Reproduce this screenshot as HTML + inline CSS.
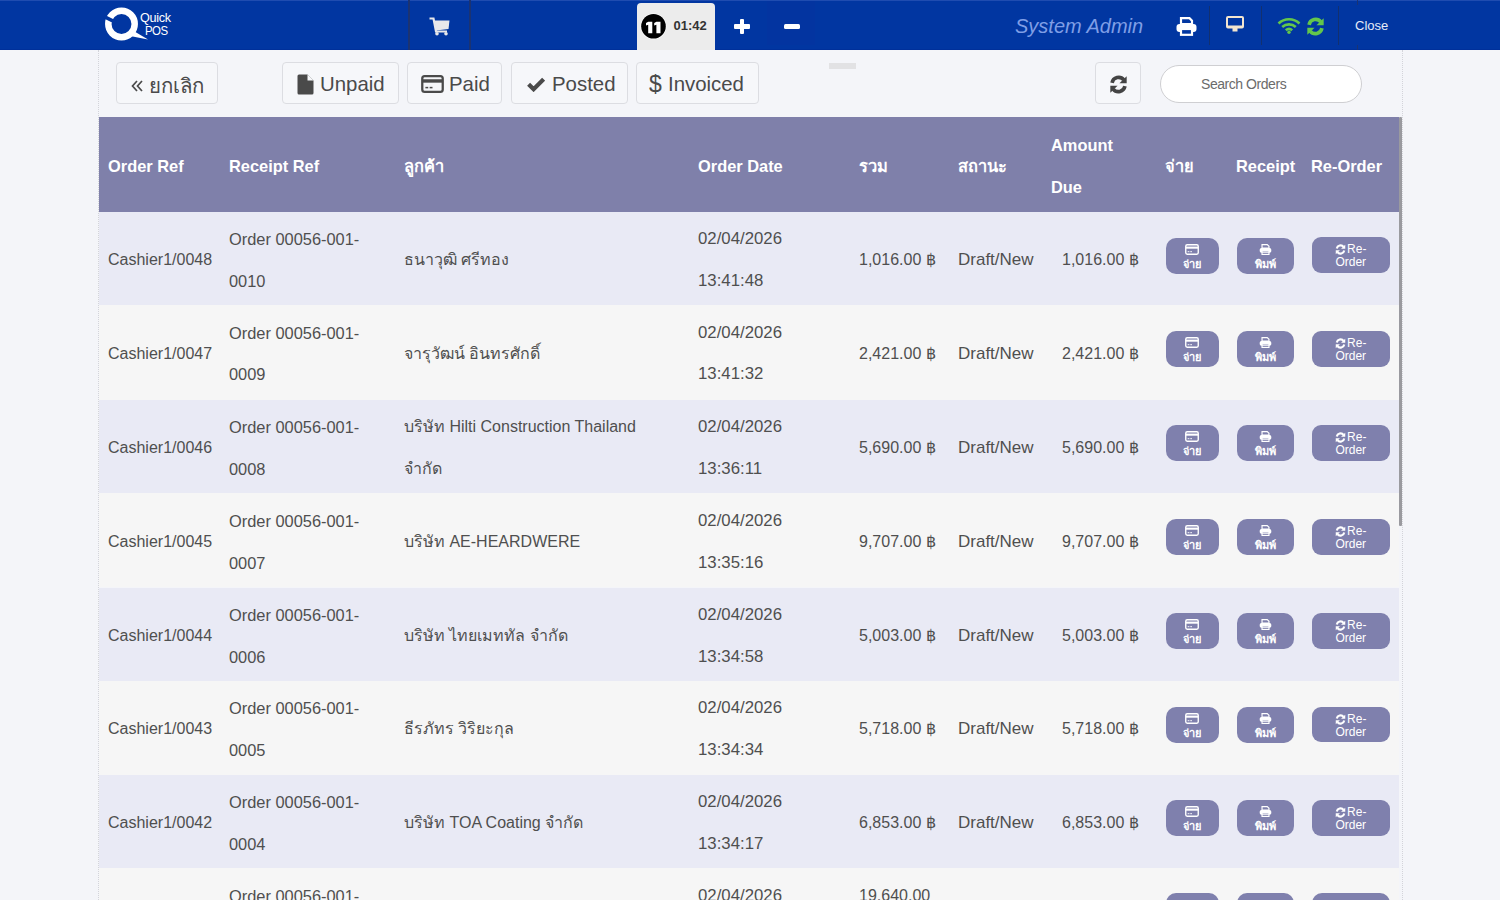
<!DOCTYPE html>
<html><head><meta charset="utf-8">
<style>
*{box-sizing:border-box;margin:0;padding:0}
html,body{width:1500px;height:900px;overflow:hidden;background:#f4f5f9;font-family:"Liberation Sans",sans-serif;}
.a{position:absolute}
#nav{position:absolute;left:0;top:0;width:1500px;height:50px;background:#0136a1;}
.sep{position:absolute;top:0;width:2px;height:50px;background:#1b3372;}
.sep2{position:absolute;top:6px;width:1px;height:39px;background:#12306f;}
#cont{position:absolute;left:98px;top:50px;width:1305px;height:850px;border-left:1px dotted #d3d4da;border-right:1px dotted #d3d4da;}
.btn{position:absolute;top:62px;height:42px;border:1px solid #dcdde2;border-radius:4px;background:#f6f7fa;color:#4a4a4a;font-size:20.4px;line-height:40px;white-space:nowrap}
.btn .ic{position:absolute}
.btn .t{position:absolute;top:1px}
#thead{position:absolute;left:99px;top:117px;width:1300px;height:95px;background:#7f80aa;color:#fff;font-weight:bold;font-size:16.4px}
.th{position:absolute;white-space:nowrap;line-height:20px}
.row{position:absolute;left:99px;width:1300px;height:93.7px;color:#4f4f4f;font-size:16px}
.row.o{background:#e9eaf5}
.row.e{background:#f6f6f6}
.c{position:absolute;white-space:nowrap;line-height:20px}
.ab{position:absolute;background:#7f80ad;border-radius:10px;color:#fff;text-align:center}
.ab .ic{position:absolute;left:0;width:100%;line-height:0}
.ab .bt{position:absolute;left:0;width:100%;font-size:11px;font-weight:bold;line-height:12px}
.ab .rt{position:absolute;left:0;top:6px;width:100%;font-size:12px;line-height:13px}
.ab .rt svg{vertical-align:top;margin-top:1px;margin-right:1px}
</style></head><body>
<div id="nav">
  <div class="a" style="left:0;top:0;width:1500px;height:1px;background:#1f4cb0"></div>
  <div class="a" style="left:0;top:49px;width:1500px;height:1px;background:#00309a"></div>
  <div class="a" style="left:1356.5px;top:0;width:1.5px;height:5px;background:#1b3372"></div><div class="a" style="left:1356.5px;top:45px;width:1.5px;height:5px;background:#1b3372"></div>
  <!-- logo -->
  <svg class="a" style="left:103px;top:5px" width="50" height="40" viewBox="0 0 50 40">
    <circle cx="18.5" cy="19" r="13.2" fill="none" stroke="#fff" stroke-width="6.5"/>
    <path d="M22 30 L45 34.5 L29 25 Z" fill="#fff"/>
    <path d="M2 10 L14 16 L12 19 L0 13 Z" fill="#0136a1"/>
  </svg>
  <div class="a" style="left:139.5px;top:11px;color:#fff;font-size:13px;line-height:13px;letter-spacing:-0.3px;transform:scaleX(0.97);transform-origin:0 0">Quick</div>
  <div class="a" style="left:145px;top:24px;color:#fff;font-size:13px;line-height:13px;letter-spacing:-0.6px;transform:scaleX(0.88);transform-origin:0 0">POS</div>
  <div class="sep" style="left:408px"></div>
  <div class="sep" style="left:469px"></div>
  <!-- cart -->
  <svg class="a" style="left:429px;top:17px" width="21" height="19" viewBox="0 0 21 19">
    <path d="M0.5 1.5h4l2.5 13h11" fill="none" stroke="#e8e8ea" stroke-width="2.2"/>
    <path d="M5.5 3.5h15l-1 8.5l-12.5 1.5z" fill="#e8e8ea"/>
    <circle cx="8" cy="16.8" r="1.8" fill="#e8e8ea"/><circle cx="17" cy="16.8" r="1.8" fill="#e8e8ea"/>
  </svg>
  <!-- tab -->
  <div class="a" style="left:637px;top:3px;width:78px;height:47px;background:#ececec;border-radius:4px 4px 0 0"></div>
  <svg class="a" style="left:640px;top:13px" width="27" height="27" viewBox="0 0 27 27"><circle cx="13.5" cy="13.3" r="12.9" fill="#fff"/><circle cx="13.5" cy="13.3" r="12.3" fill="#000"/><path d="M8.2 8.7h4.1v11.6h-4.1v-8.6l-2.2 0.8v-2.4z" fill="#fff"/><path d="M16.4 8.7h4.1v11.6h-4.1v-8.6l-2.2 0.8v-2.4z" fill="#fff"/></svg>
  <div class="a" style="left:673.5px;top:18px;color:#333;font-weight:bold;font-size:13px;line-height:15px">01:42</div>
  <div class="a" style="left:767px;top:1px;width:48px;height:44px;background:#0334a0"></div>
  <div class="a" style="left:734px;top:24.2px;width:16px;height:4.8px;background:#fff;border-radius:1px"></div>
  <div class="a" style="left:739.7px;top:19px;width:4.8px;height:15px;background:#fff;border-radius:1px"></div>
  <div class="a" style="left:784px;top:24.2px;width:16px;height:4.8px;background:#fff;border-radius:1.5px"></div>
  <div class="a" style="left:1015px;top:14px;color:#7f9ee6;font-style:italic;font-size:20px;line-height:24px">System Admin</div>
  <!-- printer -->
  <svg class="a" style="left:1176px;top:17px" width="21" height="19" viewBox="0 0 21 19">
    <path d="M5 1.2h8.5l2.5 2.5v3.3H5z" fill="none" stroke="#fff" stroke-width="2.2"/>
    <rect x="0.5" y="7" width="20" height="8" rx="3" fill="#fff"/>
    <rect x="5" y="12" width="11" height="5.8" fill="#0136a1" stroke="#fff" stroke-width="2.2"/>
  </svg>
  <div class="sep2" style="left:1208.5px"></div>
  <!-- monitor -->
  <svg class="a" style="left:1226px;top:16px" width="18" height="16" viewBox="0 0 18 16">
    <rect x="1" y="1" width="16" height="10.5" rx="1" fill="none" stroke="#f3e5cf" stroke-width="2"/>
    <rect x="1" y="9.5" width="16" height="2.5" fill="#f3e5cf"/>
    <rect x="6.5" y="12" width="5" height="3.5" fill="#f3e5cf"/>
  </svg>
  <div class="sep2" style="left:1260.5px"></div>
  <!-- wifi -->
  <svg class="a" style="left:1277px;top:17px" width="24" height="17" viewBox="0 0 24 17">
    <path d="M1.5 6.5A15 15 0 0 1 22.5 6.5" fill="none" stroke="#63c64b" stroke-width="2.6"/>
    <path d="M5.2 10A10 10 0 0 1 18.8 10" fill="none" stroke="#63c64b" stroke-width="2.6"/>
    <path d="M8.8 13.2A5 5 0 0 1 15.2 13.2" fill="none" stroke="#63c64b" stroke-width="2.6"/>
    <circle cx="12" cy="15.3" r="1.7" fill="#63c64b"/>
  </svg>
  <svg class="a" style="left:1306px;top:17px" width="19" height="19" viewBox="0 0 20 20">
    <path d="M3.2 8.2A7 7 0 0 1 15.6 5.2" fill="none" stroke="#63c64b" stroke-width="3.8"/><path d="M18.6 1.2v7.6h-7.6z" fill="#63c64b"/><path d="M16.8 11.8A7 7 0 0 1 4.4 14.8" fill="none" stroke="#63c64b" stroke-width="3.8"/><path d="M1.4 18.8v-7.6h7.6z" fill="#63c64b"/>
  </svg>
  <div class="sep2" style="left:1338px"></div>
  <div class="a" style="left:1355px;top:18px;color:#e6ebf7;font-size:13px;line-height:15px">Close</div>
</div>
<div id="cont"></div>
<!-- toolbar -->
<div class="btn" style="left:116px;width:102px"><svg class="ic" style="left:14px;top:17px" width="12" height="12" viewBox="0 0 12 12"><path d="M6 1L1.5 6L6 11M11 1L6.5 6L11 11" fill="none" stroke="#4a4a4a" stroke-width="1.7"/></svg><div class="t" style="left:31.5px;top:2.5px">ยกเลิก</div></div>
<div class="btn" style="left:282px;width:117px">
  <svg class="ic" style="left:13px;top:11px" width="18" height="21" viewBox="0 0 18 21"><path d="M1.5 0.5h10l6 6v12.5a1.5 1.5 0 0 1-1.5 1.5h-13a1.5 1.5 0 0 1-1.5-1.5v-17a1.5 1.5 0 0 1 1.5-1.5z" fill="#4a4a4a"/><path d="M11.5 0.5v6h6z" fill="#f6f7fa"/></svg>
  <div class="t" style="left:37px">Unpaid</div></div>
<div class="btn" style="left:407px;width:95px">
  <svg class="ic" style="left:13px;top:12px" width="23" height="18" viewBox="0 0 24 19"><rect x="1.2" y="1.2" width="21.6" height="16.6" rx="2.5" fill="none" stroke="#4a4a4a" stroke-width="2.4"/><rect x="1.2" y="4.5" width="21.6" height="3.6" fill="#4a4a4a"/><rect x="4.5" y="12.5" width="3" height="1.6" fill="#4a4a4a"/><rect x="9" y="12.5" width="3" height="1.6" fill="#4a4a4a"/></svg>
  <div class="t" style="left:41px">Paid</div></div>
<div class="btn" style="left:511px;width:117px">
  <svg class="ic" style="left:15px;top:14px" width="18" height="15" viewBox="0 0 18 15"><path d="M1.6 7.2l5 5l10-10" fill="none" stroke="#4a4a4a" stroke-width="4.2"/></svg>
  <div class="t" style="left:40px">Posted</div></div>
<div class="btn" style="left:636px;width:123px">
  <div class="t" style="left:12px;font-size:23px;top:1px">$</div>
  <div class="t" style="left:31px">Invoiced</div></div>
<div class="a" style="left:829px;top:63px;width:27px;height:6px;background:#e2e2e4"></div>
<div class="btn" style="left:1095px;width:46px">
  <svg class="ic" style="left:13px;top:12px" width="19" height="19" viewBox="0 0 20 20"><path d="M3.2 8.2A7 7 0 0 1 15.6 5.2" fill="none" stroke="#444" stroke-width="3.8"/><path d="M18.6 1.2v7.6h-7.6z" fill="#444"/><path d="M16.8 11.8A7 7 0 0 1 4.4 14.8" fill="none" stroke="#444" stroke-width="3.8"/><path d="M1.4 18.8v-7.6h7.6z" fill="#444"/></svg>
</div>
<div class="a" style="left:1160px;top:65px;width:202px;height:37.5px;border:1px solid #cfcfd2;border-radius:19px;background:#fff;color:#6b6b6b;font-size:14px;line-height:35px;padding-top:1px;letter-spacing:-0.45px;padding-left:40px">Search Orders</div>
<!-- table header -->
<div id="thead">
  <div class="th" style="left:9px;top:39px">Order Ref</div>
  <div class="th" style="left:130px;top:39px">Receipt Ref</div>
  <div class="th" style="left:305px;top:39px">ลูกค้า</div>
  <div class="th" style="left:599px;top:39px">Order Date</div>
  <div class="th" style="left:760px;top:39px">รวม</div>
  <div class="th" style="left:859px;top:39px">สถานะ</div>
  <div class="th" style="left:952px;top:18px">Amount</div>
  <div class="th" style="left:952px;top:60px">Due</div>
  <div class="th" style="left:1066px;top:39px">จ่าย</div>
  <div class="th" style="left:1137px;top:39px">Receipt</div>
  <div class="th" style="left:1212px;top:39px">Re-Order</div>
</div>
<div class="row o" style="top:212.00px;height:92.60px">
<div class="c" style="left:9px;top:38.1px;">Cashier1/0048</div>
<div class="c" style="left:130px;top:17.0px;font-size:16.4px">Order 00056-001-</div>
<div class="c" style="left:130px;top:58.7px;font-size:16.4px">0010</div>
<div class="c" style="left:305px;top:38.1px;">ธนาวุฒิ ศรีทอง</div>
<div class="c" style="left:599px;top:17.0px;font-size:16.8px">02/04/2026</div>
<div class="c" style="left:599px;top:58.7px;font-size:16.8px">13:41:48</div>
<div class="c" style="left:760px;top:38.1px;">1,016.00 ฿</div>
<div class="c" style="left:859px;top:38.1px;font-size:17px">Draft/New</div>
<div class="c" style="left:963px;top:38.1px;">1,016.00 ฿</div>
<div class="ab" style="left:1066.5px;top:25.5px;width:53px;height:36px;border-radius:10px"><div class="ic" style="top:6px"><svg width="14" height="11" viewBox="0 0 24 19"><rect x="1.2" y="1.2" width="21.6" height="16.6" rx="2.5" fill="none" stroke="#fff" stroke-width="2.4"/><rect x="1.2" y="4.5" width="21.6" height="3.6" fill="#fff"/><rect x="4.5" y="12.5" width="3" height="1.6" fill="#fff"/><rect x="9" y="12.5" width="3" height="1.6" fill="#fff"/></svg></div><div class="bt" style="top:20px">จ่าย</div></div>
<div class="ab" style="left:1137.5px;top:25.5px;width:57px;height:36px;border-radius:10px"><div class="ic" style="top:6px"><svg width="13" height="11" viewBox="0 0 22 19"><path d="M5 1h9l3 3v3H5z" fill="none" stroke="#fff" stroke-width="2"/><rect x="1" y="7" width="20" height="8" rx="3" fill="#fff"/><rect x="5" y="12" width="12" height="6" fill="#7f80ad" stroke="#fff" stroke-width="2"/><rect x="5" y="13.5" width="12" height="1.6" fill="#fff"/></svg></div><div class="bt" style="top:20px">พิมพ์</div></div>
<div class="ab" style="left:1212.5px;top:25.3px;width:78.5px;height:35.5px;border-radius:9px"><div class="rt"><svg width="11" height="11" viewBox="0 0 20 20"><path d="M3.2 8.2A7 7 0 0 1 15.6 5.2" fill="none" stroke="#fff" stroke-width="3.8"/><path d="M18.6 1.2v7.6h-7.6z" fill="#fff"/><path d="M16.8 11.8A7 7 0 0 1 4.4 14.8" fill="none" stroke="#fff" stroke-width="3.8"/><path d="M1.4 18.8v-7.6h7.6z" fill="#fff"/></svg><span style="vertical-align:top">Re-</span><br>Order</div></div>
</div>
<div class="row e" style="top:304.60px;height:95.10px">
<div class="c" style="left:9px;top:39.3px;">Cashier1/0047</div>
<div class="c" style="left:130px;top:18.2px;font-size:16.4px">Order 00056-001-</div>
<div class="c" style="left:130px;top:59.9px;font-size:16.4px">0009</div>
<div class="c" style="left:305px;top:39.3px;">จารุวัฒน์ อินทรศักดิ์</div>
<div class="c" style="left:599px;top:18.2px;font-size:16.8px">02/04/2026</div>
<div class="c" style="left:599px;top:59.9px;font-size:16.8px">13:41:32</div>
<div class="c" style="left:760px;top:39.3px;">2,421.00 ฿</div>
<div class="c" style="left:859px;top:39.3px;font-size:17px">Draft/New</div>
<div class="c" style="left:963px;top:39.3px;">2,421.00 ฿</div>
<div class="ab" style="left:1066.5px;top:26.7px;width:53px;height:36px;border-radius:10px"><div class="ic" style="top:6px"><svg width="14" height="11" viewBox="0 0 24 19"><rect x="1.2" y="1.2" width="21.6" height="16.6" rx="2.5" fill="none" stroke="#fff" stroke-width="2.4"/><rect x="1.2" y="4.5" width="21.6" height="3.6" fill="#fff"/><rect x="4.5" y="12.5" width="3" height="1.6" fill="#fff"/><rect x="9" y="12.5" width="3" height="1.6" fill="#fff"/></svg></div><div class="bt" style="top:20px">จ่าย</div></div>
<div class="ab" style="left:1137.5px;top:26.7px;width:57px;height:36px;border-radius:10px"><div class="ic" style="top:6px"><svg width="13" height="11" viewBox="0 0 22 19"><path d="M5 1h9l3 3v3H5z" fill="none" stroke="#fff" stroke-width="2"/><rect x="1" y="7" width="20" height="8" rx="3" fill="#fff"/><rect x="5" y="12" width="12" height="6" fill="#7f80ad" stroke="#fff" stroke-width="2"/><rect x="5" y="13.5" width="12" height="1.6" fill="#fff"/></svg></div><div class="bt" style="top:20px">พิมพ์</div></div>
<div class="ab" style="left:1212.5px;top:26.5px;width:78.5px;height:35.5px;border-radius:9px"><div class="rt"><svg width="11" height="11" viewBox="0 0 20 20"><path d="M3.2 8.2A7 7 0 0 1 15.6 5.2" fill="none" stroke="#fff" stroke-width="3.8"/><path d="M18.6 1.2v7.6h-7.6z" fill="#fff"/><path d="M16.8 11.8A7 7 0 0 1 4.4 14.8" fill="none" stroke="#fff" stroke-width="3.8"/><path d="M1.4 18.8v-7.6h7.6z" fill="#fff"/></svg><span style="vertical-align:top">Re-</span><br>Order</div></div>
</div>
<div class="row o" style="top:399.70px;height:93.10px">
<div class="c" style="left:9px;top:38.4px;">Cashier1/0046</div>
<div class="c" style="left:130px;top:17.3px;font-size:16.4px">Order 00056-001-</div>
<div class="c" style="left:130px;top:59.0px;font-size:16.4px">0008</div>
<div class="c" style="left:305px;top:17.3px;">บริษัท Hilti Construction Thailand</div>
<div class="c" style="left:305px;top:59.0px;">จำกัด</div>
<div class="c" style="left:599px;top:17.3px;font-size:16.8px">02/04/2026</div>
<div class="c" style="left:599px;top:59.0px;font-size:16.8px">13:36:11</div>
<div class="c" style="left:760px;top:38.4px;">5,690.00 ฿</div>
<div class="c" style="left:859px;top:38.4px;font-size:17px">Draft/New</div>
<div class="c" style="left:963px;top:38.4px;">5,690.00 ฿</div>
<div class="ab" style="left:1066.5px;top:25.8px;width:53px;height:36px;border-radius:10px"><div class="ic" style="top:6px"><svg width="14" height="11" viewBox="0 0 24 19"><rect x="1.2" y="1.2" width="21.6" height="16.6" rx="2.5" fill="none" stroke="#fff" stroke-width="2.4"/><rect x="1.2" y="4.5" width="21.6" height="3.6" fill="#fff"/><rect x="4.5" y="12.5" width="3" height="1.6" fill="#fff"/><rect x="9" y="12.5" width="3" height="1.6" fill="#fff"/></svg></div><div class="bt" style="top:20px">จ่าย</div></div>
<div class="ab" style="left:1137.5px;top:25.8px;width:57px;height:36px;border-radius:10px"><div class="ic" style="top:6px"><svg width="13" height="11" viewBox="0 0 22 19"><path d="M5 1h9l3 3v3H5z" fill="none" stroke="#fff" stroke-width="2"/><rect x="1" y="7" width="20" height="8" rx="3" fill="#fff"/><rect x="5" y="12" width="12" height="6" fill="#7f80ad" stroke="#fff" stroke-width="2"/><rect x="5" y="13.5" width="12" height="1.6" fill="#fff"/></svg></div><div class="bt" style="top:20px">พิมพ์</div></div>
<div class="ab" style="left:1212.5px;top:25.6px;width:78.5px;height:35.5px;border-radius:9px"><div class="rt"><svg width="11" height="11" viewBox="0 0 20 20"><path d="M3.2 8.2A7 7 0 0 1 15.6 5.2" fill="none" stroke="#fff" stroke-width="3.8"/><path d="M18.6 1.2v7.6h-7.6z" fill="#fff"/><path d="M16.8 11.8A7 7 0 0 1 4.4 14.8" fill="none" stroke="#fff" stroke-width="3.8"/><path d="M1.4 18.8v-7.6h7.6z" fill="#fff"/></svg><span style="vertical-align:top">Re-</span><br>Order</div></div>
</div>
<div class="row e" style="top:492.80px;height:94.70px">
<div class="c" style="left:9px;top:39.1px;">Cashier1/0045</div>
<div class="c" style="left:130px;top:18.0px;font-size:16.4px">Order 00056-001-</div>
<div class="c" style="left:130px;top:59.8px;font-size:16.4px">0007</div>
<div class="c" style="left:305px;top:39.1px;">บริษัท AE-HEARDWERE</div>
<div class="c" style="left:599px;top:18.0px;font-size:16.8px">02/04/2026</div>
<div class="c" style="left:599px;top:59.8px;font-size:16.8px">13:35:16</div>
<div class="c" style="left:760px;top:39.1px;">9,707.00 ฿</div>
<div class="c" style="left:859px;top:39.1px;font-size:17px">Draft/New</div>
<div class="c" style="left:963px;top:39.1px;">9,707.00 ฿</div>
<div class="ab" style="left:1066.5px;top:26.5px;width:53px;height:36px;border-radius:10px"><div class="ic" style="top:6px"><svg width="14" height="11" viewBox="0 0 24 19"><rect x="1.2" y="1.2" width="21.6" height="16.6" rx="2.5" fill="none" stroke="#fff" stroke-width="2.4"/><rect x="1.2" y="4.5" width="21.6" height="3.6" fill="#fff"/><rect x="4.5" y="12.5" width="3" height="1.6" fill="#fff"/><rect x="9" y="12.5" width="3" height="1.6" fill="#fff"/></svg></div><div class="bt" style="top:20px">จ่าย</div></div>
<div class="ab" style="left:1137.5px;top:26.5px;width:57px;height:36px;border-radius:10px"><div class="ic" style="top:6px"><svg width="13" height="11" viewBox="0 0 22 19"><path d="M5 1h9l3 3v3H5z" fill="none" stroke="#fff" stroke-width="2"/><rect x="1" y="7" width="20" height="8" rx="3" fill="#fff"/><rect x="5" y="12" width="12" height="6" fill="#7f80ad" stroke="#fff" stroke-width="2"/><rect x="5" y="13.5" width="12" height="1.6" fill="#fff"/></svg></div><div class="bt" style="top:20px">พิมพ์</div></div>
<div class="ab" style="left:1212.5px;top:26.3px;width:78.5px;height:35.5px;border-radius:9px"><div class="rt"><svg width="11" height="11" viewBox="0 0 20 20"><path d="M3.2 8.2A7 7 0 0 1 15.6 5.2" fill="none" stroke="#fff" stroke-width="3.8"/><path d="M18.6 1.2v7.6h-7.6z" fill="#fff"/><path d="M16.8 11.8A7 7 0 0 1 4.4 14.8" fill="none" stroke="#fff" stroke-width="3.8"/><path d="M1.4 18.8v-7.6h7.6z" fill="#fff"/></svg><span style="vertical-align:top">Re-</span><br>Order</div></div>
</div>
<div class="row o" style="top:587.50px;height:93.20px">
<div class="c" style="left:9px;top:38.4px;">Cashier1/0044</div>
<div class="c" style="left:130px;top:17.3px;font-size:16.4px">Order 00056-001-</div>
<div class="c" style="left:130px;top:59.0px;font-size:16.4px">0006</div>
<div class="c" style="left:305px;top:38.4px;">บริษัท ไทยเมททัล จำกัด</div>
<div class="c" style="left:599px;top:17.3px;font-size:16.8px">02/04/2026</div>
<div class="c" style="left:599px;top:59.0px;font-size:16.8px">13:34:58</div>
<div class="c" style="left:760px;top:38.4px;">5,003.00 ฿</div>
<div class="c" style="left:859px;top:38.4px;font-size:17px">Draft/New</div>
<div class="c" style="left:963px;top:38.4px;">5,003.00 ฿</div>
<div class="ab" style="left:1066.5px;top:25.8px;width:53px;height:36px;border-radius:10px"><div class="ic" style="top:6px"><svg width="14" height="11" viewBox="0 0 24 19"><rect x="1.2" y="1.2" width="21.6" height="16.6" rx="2.5" fill="none" stroke="#fff" stroke-width="2.4"/><rect x="1.2" y="4.5" width="21.6" height="3.6" fill="#fff"/><rect x="4.5" y="12.5" width="3" height="1.6" fill="#fff"/><rect x="9" y="12.5" width="3" height="1.6" fill="#fff"/></svg></div><div class="bt" style="top:20px">จ่าย</div></div>
<div class="ab" style="left:1137.5px;top:25.8px;width:57px;height:36px;border-radius:10px"><div class="ic" style="top:6px"><svg width="13" height="11" viewBox="0 0 22 19"><path d="M5 1h9l3 3v3H5z" fill="none" stroke="#fff" stroke-width="2"/><rect x="1" y="7" width="20" height="8" rx="3" fill="#fff"/><rect x="5" y="12" width="12" height="6" fill="#7f80ad" stroke="#fff" stroke-width="2"/><rect x="5" y="13.5" width="12" height="1.6" fill="#fff"/></svg></div><div class="bt" style="top:20px">พิมพ์</div></div>
<div class="ab" style="left:1212.5px;top:25.6px;width:78.5px;height:35.5px;border-radius:9px"><div class="rt"><svg width="11" height="11" viewBox="0 0 20 20"><path d="M3.2 8.2A7 7 0 0 1 15.6 5.2" fill="none" stroke="#fff" stroke-width="3.8"/><path d="M18.6 1.2v7.6h-7.6z" fill="#fff"/><path d="M16.8 11.8A7 7 0 0 1 4.4 14.8" fill="none" stroke="#fff" stroke-width="3.8"/><path d="M1.4 18.8v-7.6h7.6z" fill="#fff"/></svg><span style="vertical-align:top">Re-</span><br>Order</div></div>
</div>
<div class="row e" style="top:680.70px;height:94.10px">
<div class="c" style="left:9px;top:38.8px;">Cashier1/0043</div>
<div class="c" style="left:130px;top:17.7px;font-size:16.4px">Order 00056-001-</div>
<div class="c" style="left:130px;top:59.4px;font-size:16.4px">0005</div>
<div class="c" style="left:305px;top:38.8px;">ธีรภัทร วิริยะกุล</div>
<div class="c" style="left:599px;top:17.7px;font-size:16.8px">02/04/2026</div>
<div class="c" style="left:599px;top:59.4px;font-size:16.8px">13:34:34</div>
<div class="c" style="left:760px;top:38.8px;">5,718.00 ฿</div>
<div class="c" style="left:859px;top:38.8px;font-size:17px">Draft/New</div>
<div class="c" style="left:963px;top:38.8px;">5,718.00 ฿</div>
<div class="ab" style="left:1066.5px;top:26.2px;width:53px;height:36px;border-radius:10px"><div class="ic" style="top:6px"><svg width="14" height="11" viewBox="0 0 24 19"><rect x="1.2" y="1.2" width="21.6" height="16.6" rx="2.5" fill="none" stroke="#fff" stroke-width="2.4"/><rect x="1.2" y="4.5" width="21.6" height="3.6" fill="#fff"/><rect x="4.5" y="12.5" width="3" height="1.6" fill="#fff"/><rect x="9" y="12.5" width="3" height="1.6" fill="#fff"/></svg></div><div class="bt" style="top:20px">จ่าย</div></div>
<div class="ab" style="left:1137.5px;top:26.2px;width:57px;height:36px;border-radius:10px"><div class="ic" style="top:6px"><svg width="13" height="11" viewBox="0 0 22 19"><path d="M5 1h9l3 3v3H5z" fill="none" stroke="#fff" stroke-width="2"/><rect x="1" y="7" width="20" height="8" rx="3" fill="#fff"/><rect x="5" y="12" width="12" height="6" fill="#7f80ad" stroke="#fff" stroke-width="2"/><rect x="5" y="13.5" width="12" height="1.6" fill="#fff"/></svg></div><div class="bt" style="top:20px">พิมพ์</div></div>
<div class="ab" style="left:1212.5px;top:26.0px;width:78.5px;height:35.5px;border-radius:9px"><div class="rt"><svg width="11" height="11" viewBox="0 0 20 20"><path d="M3.2 8.2A7 7 0 0 1 15.6 5.2" fill="none" stroke="#fff" stroke-width="3.8"/><path d="M18.6 1.2v7.6h-7.6z" fill="#fff"/><path d="M16.8 11.8A7 7 0 0 1 4.4 14.8" fill="none" stroke="#fff" stroke-width="3.8"/><path d="M1.4 18.8v-7.6h7.6z" fill="#fff"/></svg><span style="vertical-align:top">Re-</span><br>Order</div></div>
</div>
<div class="row o" style="top:774.80px;height:93.00px">
<div class="c" style="left:9px;top:38.3px;">Cashier1/0042</div>
<div class="c" style="left:130px;top:17.2px;font-size:16.4px">Order 00056-001-</div>
<div class="c" style="left:130px;top:58.9px;font-size:16.4px">0004</div>
<div class="c" style="left:305px;top:38.3px;">บริษัท TOA Coating จำกัด</div>
<div class="c" style="left:599px;top:17.2px;font-size:16.8px">02/04/2026</div>
<div class="c" style="left:599px;top:58.9px;font-size:16.8px">13:34:17</div>
<div class="c" style="left:760px;top:38.3px;">6,853.00 ฿</div>
<div class="c" style="left:859px;top:38.3px;font-size:17px">Draft/New</div>
<div class="c" style="left:963px;top:38.3px;">6,853.00 ฿</div>
<div class="ab" style="left:1066.5px;top:25.7px;width:53px;height:36px;border-radius:10px"><div class="ic" style="top:6px"><svg width="14" height="11" viewBox="0 0 24 19"><rect x="1.2" y="1.2" width="21.6" height="16.6" rx="2.5" fill="none" stroke="#fff" stroke-width="2.4"/><rect x="1.2" y="4.5" width="21.6" height="3.6" fill="#fff"/><rect x="4.5" y="12.5" width="3" height="1.6" fill="#fff"/><rect x="9" y="12.5" width="3" height="1.6" fill="#fff"/></svg></div><div class="bt" style="top:20px">จ่าย</div></div>
<div class="ab" style="left:1137.5px;top:25.7px;width:57px;height:36px;border-radius:10px"><div class="ic" style="top:6px"><svg width="13" height="11" viewBox="0 0 22 19"><path d="M5 1h9l3 3v3H5z" fill="none" stroke="#fff" stroke-width="2"/><rect x="1" y="7" width="20" height="8" rx="3" fill="#fff"/><rect x="5" y="12" width="12" height="6" fill="#7f80ad" stroke="#fff" stroke-width="2"/><rect x="5" y="13.5" width="12" height="1.6" fill="#fff"/></svg></div><div class="bt" style="top:20px">พิมพ์</div></div>
<div class="ab" style="left:1212.5px;top:25.5px;width:78.5px;height:35.5px;border-radius:9px"><div class="rt"><svg width="11" height="11" viewBox="0 0 20 20"><path d="M3.2 8.2A7 7 0 0 1 15.6 5.2" fill="none" stroke="#fff" stroke-width="3.8"/><path d="M18.6 1.2v7.6h-7.6z" fill="#fff"/><path d="M16.8 11.8A7 7 0 0 1 4.4 14.8" fill="none" stroke="#fff" stroke-width="3.8"/><path d="M1.4 18.8v-7.6h7.6z" fill="#fff"/></svg><span style="vertical-align:top">Re-</span><br>Order</div></div>
</div>
<div class="row e" style="top:867.80px;height:40px">
<div class="c" style="left:130px;top:18px;font-size:16.4px">Order 00056-001-</div>
<div class="c" style="left:599px;top:18px;font-size:16.8px">02/04/2026</div>
<div class="c" style="left:760px;top:18px">19,640.00</div>
<div class="ab" style="left:1066.5px;top:25.5px;width:53px;height:36px"></div>
<div class="ab" style="left:1137.5px;top:25.5px;width:57px;height:36px"></div>
<div class="ab" style="left:1212.5px;top:25.3px;width:78.5px;height:35.5px"></div>
</div>
<div class="a" style="left:1399px;top:117px;width:3px;height:409px;background:#9a9a9f;border-radius:1px"></div>
</body></html>
